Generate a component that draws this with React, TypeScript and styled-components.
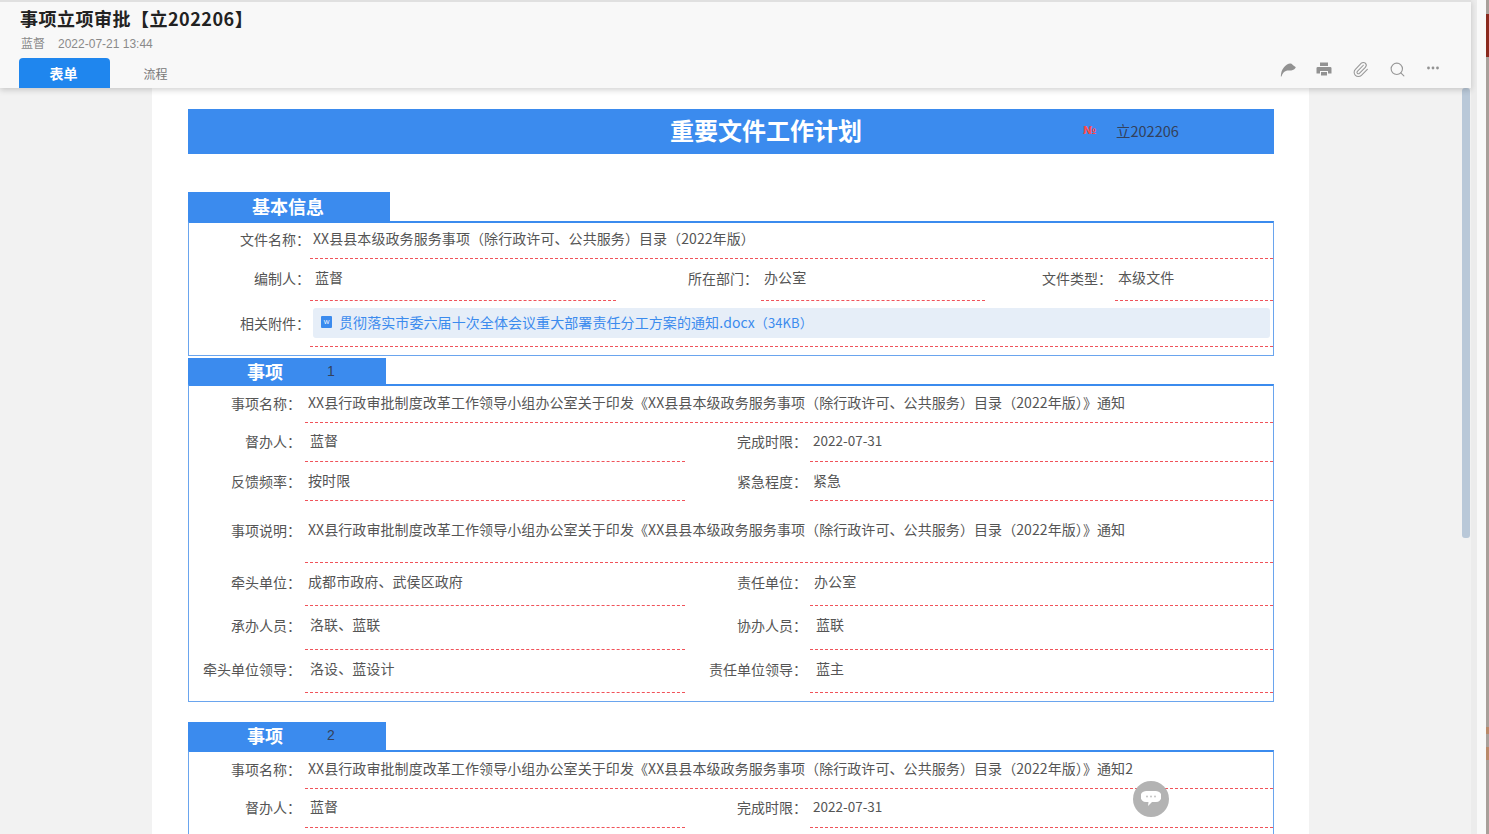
import React from 'react';
import styled, { createGlobalStyle } from 'styled-components';
import { Paperclip, Search } from 'lucide-react';

const GlobalStyle = createGlobalStyle`
  html, body { margin: 0; padding: 0; height: 100%; overflow: hidden; }
  body { font-family: "Noto Sans CJK SC", "Liberation Sans", sans-serif; }
`;

const Shell = styled.div`
  display: flex;
  width: 1489px;
  height: 834px;
  overflow: hidden;
  background: #f2f2f2;
`;

const Page = styled.div`
  width: 1471px;
  height: 834px;
  display: flex;
  flex-direction: column;
  flex: none;
`;

const Header = styled.header`
  position: relative;
  z-index: 2;
  height: 86px;
  flex: none;
  background: #f8f8f8;
  border-top: 2px solid #e0e0e0;
  box-shadow: 0 2px 6px rgba(0, 0, 0, 0.18);
  display: flex;
  flex-direction: column;
  padding-left: 19px;
`;

const Title = styled.h1`
  margin: 6px 0 0 1px;
  font-size: 18px;
  line-height: 21px;
  font-weight: 700;
  letter-spacing: 0.5px;
  color: #222;
`;

const Meta = styled.div`
  margin: 7px 0 0 2px;
  font-size: 12px;
  line-height: 16px;
  color: #8a8a8a;
  font-family: "Liberation Sans", "Noto Sans CJK SC", sans-serif;
  display: flex;
  gap: 13px;
`;

const TabBar = styled.div`
  display: flex;
  align-items: flex-end;
  justify-content: space-between;
  margin-top: 6px;
  height: 30px;
`;

const Tabs = styled.div`
  display: flex;
`;

const Tab = styled.div<{ $active?: boolean }>`
  width: 91px;
  height: 30px;
  border-radius: 4px 4px 0 0;
  display: flex;
  align-items: center;
  justify-content: center;
  padding-right: ${p => (p.$active ? '2px' : '0')};
  box-sizing: border-box;
  font-size: ${p => (p.$active ? '14px' : '12px')};
  font-weight: ${p => (p.$active ? 700 : 400)};
  background: ${p => (p.$active ? '#1f86ee' : 'transparent')};
  color: ${p => (p.$active ? '#fff' : '#777')};
`;

const Tools = styled.div`
  display: flex;
  align-items: center;
  gap: 20px;
  margin: 0 31px 7px 0;
  height: 24px;
  color: #989898;
`;

const Body = styled.div`
  position: relative;
  flex: 1;
  overflow: hidden;
  display: flex;
  padding-left: 152px;
`;

const Scrollbar = styled.div`
  position: absolute;
  top: 0;
  left: 1462px;
  width: 8px;
  height: 450px;
  background: #b9c8d8;
  border-radius: 3px;
`;

const Sheet = styled.main`
  width: 1157px;
  background: #fff;
  padding: 21px 35px 0 36px;
  box-sizing: border-box;
  flex: none;
`;

const Banner = styled.div`
  position: relative;
  height: 45px;
  background: #3b8bee;
  display: flex;
  align-items: center;
  justify-content: center;
  color: #fff;
  font-size: 24px;
  font-weight: 700;
  padding: 0 0 5px 70px;
  box-sizing: border-box;
`;

const BannerNo = styled.div`
  position: absolute;
  left: 895px;
  top: 0;
  height: 43px;
  display: flex;
  align-items: center;
  font-size: 14.500px;
  font-weight: 400;
  color: #33415c;
`;

const NoMark = styled.span`
  color: #ff4a4a;
  font-family: "DejaVu Sans", sans-serif;
  font-size: 11px;
  font-weight: 700;
  width: 33px;
`;

const SectionHead = styled.div<{ $width: number; $height: number; $top: number; $lift?: number }>`
  width: ${p => p.$width}px;
  height: ${p => p.$height}px;
  margin-top: ${p => p.$top}px;
  padding-bottom: ${p => p.$lift ?? 0}px;
  box-sizing: border-box;
  background: #3b8bee;
  color: #fff;
  font-size: 18px;
  font-weight: 700;
  display: flex;
  align-items: center;
`;

const HeadTitle = styled.span<{ $left: number }>`
  margin-left: ${p => p.$left}px;
`;

const HeadIndex = styled.span`
  margin-left: 44px;
  font-size: 14px;
  font-weight: 400;
  color: #33415c;
  font-family: "Liberation Sans", sans-serif;
`;

const Box = styled.section<{ $bottom: number }>`
  border: 1px solid #6aa5ee;
  border-top: 2px solid #3b8bee;
  padding: 1px 0 ${p => p.$bottom}px;
`;

const Row = styled.div<{ $cols: string; $height: number; $top: number }>`
  display: grid;
  grid-template-columns: ${p => p.$cols};
  height: ${p => p.$height}px;
  padding-top: ${p => p.$top}px;
  box-sizing: border-box;
`;

const Label = styled.div<{ $pad?: number }>`
  text-align: right;
  font-size: 14px;
  line-height: 20px;
  color: #555;
  margin-top: -1px;
  padding-right: ${p => p.$pad ?? 3}px;
  white-space: nowrap;
`;

const Value = styled.div<{ $rowTop: number; $inset: number }>`
  font-size: 14px;
  line-height: 20px;
  letter-spacing: 0.08px;
  color: #555;
  white-space: nowrap;
  margin-top: -${p => p.$rowTop}px;
  padding-top: ${p => p.$rowTop - 2}px;
  padding-left: ${p => p.$inset}px;
  border-bottom: 1px dashed #f0535a;
  box-sizing: border-box;
`;

const DateText = styled.span`
  font-size: 13.500px;
  letter-spacing: 0;
`;

const Attachment = styled.div`
  display: flex;
  align-items: center;
  gap: 7px;
  height: 30px;
  margin: -4px 3px 0 0;
  padding: 0 0 2px 8px;
  box-sizing: border-box;
  background: #e6eef8;
  border-radius: 3px;
  color: #3b8bee;
  font-size: 14px;
`;

const FileSize = styled.span`
  font-size: 13px;
`;

const FileMark = styled.span`
  width: 11px;
  height: 12px;
  background: #3b8bee;
  border-radius: 1px;
  color: #fff;
  font-size: 6px;
  line-height: 12px;
  text-align: center;
  font-family: "Liberation Sans", sans-serif;
`;

const ChatBubble = styled.div`
  position: absolute;
  left: 1133px;
  top: 781px;
  width: 36px;
  height: 36px;
  border-radius: 50%;
  background: #b3b3b3;
  z-index: 3;
  display: flex;
  align-items: center;
  justify-content: center;
`;

const SideStrip = styled.aside`
  flex: 1;
  background: linear-gradient(90deg, #ececec 0 6px, #f9f9f9 6px 15px, #a8a09a 15px);
  position: relative;
`;

const SideAccent = styled.div<{ $top: number; $height: number; $color: string }>`
  position: absolute;
  right: 0;
  top: ${p => p.$top}px;
  width: 3px;
  height: ${p => p.$height}px;
  background: ${p => p.$color};
`;

const NOTICE = 'XX县行政审批制度改革工作领导小组办公室关于印发《XX县县本级政务服务事项（除行政许可、公共服务）目录（2022年版）》通知';

const S1_WIDE = '121px 1fr';
const S1_COLS = '121px 306px 145px 224px 130px 1fr';
const S2_WIDE = '116px 1fr';
const S2_COLS = '116px 380px 125px 1fr';

const ReplyIcon = () => (
  <svg width="16" height="16" viewBox="0 0 16 16" fill="#929292">
    <path d="M.800 15.500C1 12 1.800 8.500 4 6.300 6 3.800 8.500 2.300 10.500 2.500c1.500.2 2.300 1.500 3.300 2.300.8.600 1.700 1 2 1.500-.8 1.600-2.500 3-4.500 3.200-1.800.2-3.300-.2-4.800.2C4 10.300 2.300 12.500 1.500 15.500z" />
  </svg>
);

const PrintIcon = () => (
  <svg width="16" height="16" viewBox="0 0 16 16" fill="#929292">
    <path d="M4 1.500h8V5H4zM1.800 6h12.400a1.300 1.300 0 0 1 1.300 1.300v5.200H12V10H4v2.500H.5V7.300A1.300 1.300 0 0 1 1.800 6zM5 11h6v3.500H5z" />
  </svg>
);

const DotsIcon = () => (
  <svg width="14" height="16" viewBox="0 0 14 16" fill="#929292">
    <circle cx="2.500" cy="7" r="1.400" />
    <circle cx="7" cy="7" r="1.400" />
    <circle cx="11.500" cy="7" r="1.400" />
  </svg>
);

const ChatIcon = () => (
  <svg width="20" height="18" viewBox="0 0 20 18">
    <path d="M5 1h10a4.500 4.500 0 0 1 0 11h-4l-4 4 .5-4H5A4.500 4.500 0 0 1 5 1z" fill="#fff" />
    <circle cx="6" cy="6.500" r="1" fill="#c4c4c4" />
    <circle cx="10" cy="6.500" r="1" fill="#c4c4c4" />
    <circle cx="14" cy="6.500" r="1" fill="#c4c4c4" />
  </svg>
);

export default function App() {
  return (
    <Shell>
      <GlobalStyle />
      <Page>
        <Header>
          <Title>事项立项审批【立202206】</Title>
          <Meta>
            <span>蓝督</span>
            <span>2022-07-21 13:44</span>
          </Meta>
          <TabBar>
            <Tabs>
              <Tab $active>表单</Tab>
              <Tab>流程</Tab>
            </Tabs>
            <Tools>
              <ReplyIcon />
              <PrintIcon />
              <Paperclip size={17} strokeWidth={1.5} />
              <Search size={17} strokeWidth={1.6} />
              <DotsIcon />
            </Tools>
          </TabBar>
        </Header>
        <Body>
          <Sheet>
            <Banner>
              重要文件工作计划
              <BannerNo>
                <NoMark>№</NoMark>立202206
              </BannerNo>
            </Banner>

            <SectionHead $width={202} $height={29} $top={38} $lift={2}>
              <HeadTitle $left={64}>基本信息</HeadTitle>
            </SectionHead>
            <Box $bottom={8}>
              <Row $cols={S1_WIDE} $height={35} $top={6}>
                <Label $pad={0}>文件名称：</Label>
                <Value $rowTop={6} $inset={3}>XX县县本级政务服务事项（除行政许可、公共服务）目录（2022年版）</Value>
              </Row>
              <Row $cols={S1_COLS} $height={42} $top={10}>
                <Label $pad={0}>编制人：</Label>
                <Value $rowTop={10} $inset={5}>蓝督</Value>
                <Label>所在部门：</Label>
                <Value $rowTop={10} $inset={3}>办公室</Value>
                <Label>文件类型：</Label>
                <Value $rowTop={10} $inset={3}>本级文件</Value>
              </Row>
              <Row $cols={S1_WIDE} $height={46} $top={13}>
                <Label $pad={0}>相关附件：</Label>
                <Value $rowTop={13} $inset={3}>
                  <Attachment>
                    <FileMark>W</FileMark>
                    <span>
                      贯彻落实市委六届十次全体会议重大部署责任分工方案的通知.docx<FileSize>（34KB）</FileSize>
                    </span>
                  </Attachment>
                </Value>
              </Row>
            </Box>

            <SectionHead $width={198} $height={26} $top={2}>
              <HeadTitle $left={59}>事项</HeadTitle>
              <HeadIndex>1</HeadIndex>
            </SectionHead>
            <Box $bottom={8}>
              <Row $cols={S2_WIDE} $height={36} $top={7}>
                <Label $pad={4}>事项名称：</Label>
                <Value $rowTop={7} $inset={3}>{NOTICE}</Value>
              </Row>
              <Row $cols={S2_COLS} $height={39} $top={9}>
                <Label $pad={4}>督办人：</Label>
                <Value $rowTop={9} $inset={5}>蓝督</Value>
                <Label>完成时限：</Label>
                <Value $rowTop={9} $inset={3}><DateText>2022-07-31</DateText></Value>
              </Row>
              <Row $cols={S2_COLS} $height={39} $top={10}>
                <Label $pad={4}>反馈频率：</Label>
                <Value $rowTop={10} $inset={3}>按时限</Value>
                <Label>紧急程度：</Label>
                <Value $rowTop={10} $inset={3}>紧急</Value>
              </Row>
              <Row $cols={S2_WIDE} $height={62} $top={20}>
                <Label $pad={4}>事项说明：</Label>
                <Value $rowTop={20} $inset={3}>{NOTICE}</Value>
              </Row>
              <Row $cols={S2_COLS} $height={43} $top={10}>
                <Label $pad={4}>牵头单位：</Label>
                <Value $rowTop={10} $inset={3}>成都市政府、武侯区政府</Value>
                <Label>责任单位：</Label>
                <Value $rowTop={10} $inset={4}>办公室</Value>
              </Row>
              <Row $cols={S2_COLS} $height={44} $top={10}>
                <Label $pad={4}>承办人员：</Label>
                <Value $rowTop={10} $inset={5}>洛联、蓝联</Value>
                <Label>协办人员：</Label>
                <Value $rowTop={10} $inset={6}>蓝联</Value>
              </Row>
              <Row $cols={S2_COLS} $height={43} $top={10}>
                <Label $pad={4}>牵头单位领导：</Label>
                <Value $rowTop={10} $inset={5}>洛设、蓝设计</Value>
                <Label>责任单位领导：</Label>
                <Value $rowTop={10} $inset={6}>蓝主</Value>
              </Row>
            </Box>

            <SectionHead $width={198} $height={28} $top={20} $lift={2}>
              <HeadTitle $left={59}>事项</HeadTitle>
              <HeadIndex>2</HeadIndex>
            </SectionHead>
            <Box $bottom={0}>
              <Row $cols={S2_WIDE} $height={36} $top={7}>
                <Label $pad={4}>事项名称：</Label>
                <Value $rowTop={7} $inset={3}>{NOTICE}2</Value>
              </Row>
              <Row $cols={S2_COLS} $height={39} $top={9}>
                <Label $pad={4}>督办人：</Label>
                <Value $rowTop={9} $inset={5}>蓝督</Value>
                <Label>完成时限：</Label>
                <Value $rowTop={9} $inset={3}><DateText>2022-07-31</DateText></Value>
              </Row>
              <Row $cols={S2_COLS} $height={39} $top={0} />
            </Box>
          </Sheet>
          <Scrollbar />
        </Body>
        <ChatBubble>
          <ChatIcon />
        </ChatBubble>
      </Page>
      <SideStrip>
        <SideAccent $top={14} $height={43} $color="#8a2a1e" />
        <SideAccent $top={727} $height={7} $color="#b98a6a" />
        <SideAccent $top={747} $height={13} $color="#b98a6a" />
      </SideStrip>
    </Shell>
  );
}
